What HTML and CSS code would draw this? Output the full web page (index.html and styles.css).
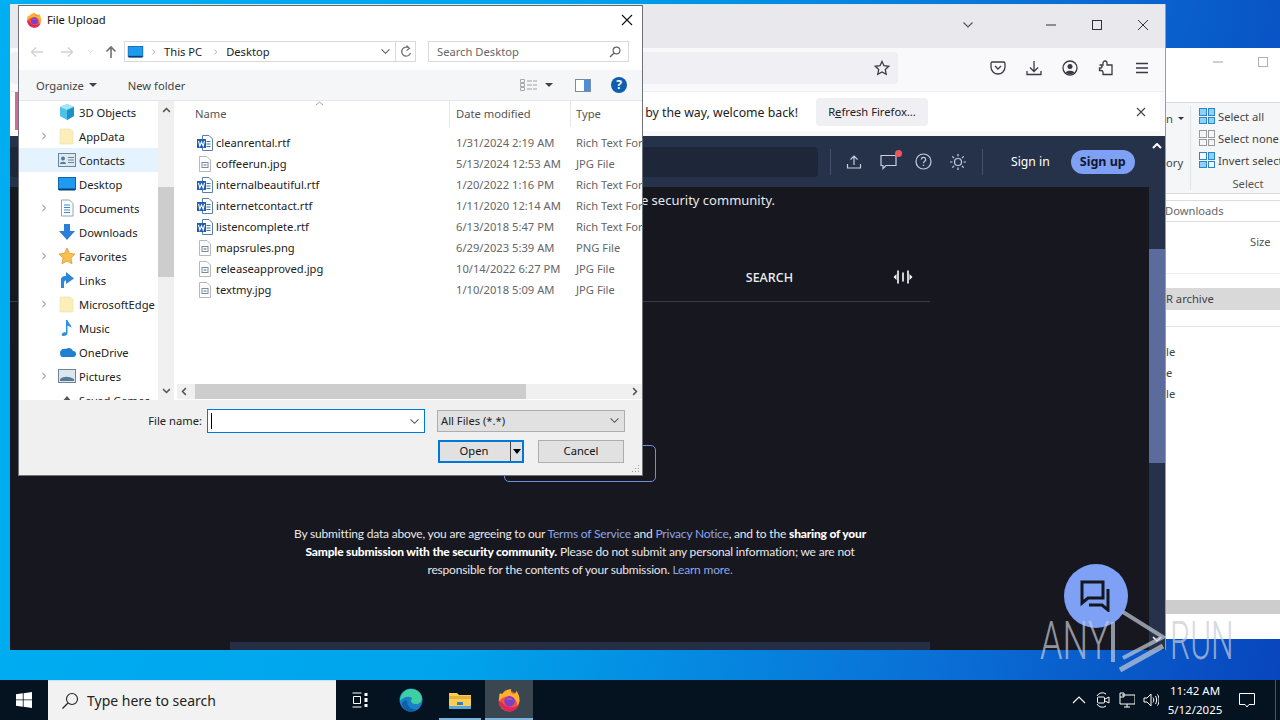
FILE: index.html
```html
<!DOCTYPE html>
<html lang="en">
<head>
    <meta charset="utf-8">
    <title>File Upload</title>
    <link rel="stylesheet" href="styles.css">
</head>
<body>
<svg class="defs" aria-hidden="true">
    <symbol id="fx" viewBox="0 0 20 20">
        <circle cx="10" cy="11" r="8.6" fill="#f2553a"/>
        <path d="M2 5 C2 8 1.500 9 1.500 11 C4 8 6 7 10 7 C14 7 17 10 17 15 C20 11 19 6 16 2 C16 3 16 4 14 5 C12 4 11 3 12 1 C9 1 6 2 4.500 5 C4 5 3 4 2 5Z" fill="#ffb02e"/>
        <path d="M1.500 11 C2 16 7 19.500 11 19.500 C15 19.500 17 17 18 14 C15 17 8 17 5 13 C4 12 3 11 1.500 11Z" fill="#e3245c"/>
        <circle cx="10.500" cy="11" r="4.400" fill="#7b3fc8"/>
        <path d="M7 9 C9 8 12 8 13 10 C11 10 9 10 7 9Z" fill="#c04fb0"/>
    </symbol>
    <symbol id="word" viewBox="0 0 18 18">
        <path d="M6.500 1.500H13L16.500 5V16.500H6.500Z" fill="#fff" stroke="#5a7fa8"/>
        <path d="M10.500 7.500h4M10.500 10h4M10.500 12.500h4" stroke="#3a6ea8"/>
        <rect x="1" y="5" width="9" height="9" fill="#1f5cb5"/>
        <path d="M2.500 6.800 L3.800 12 L5.500 8 L7.200 12 L8.500 6.800" fill="none" stroke="#fff" stroke-width="1.100"/>
    </symbol>
    <symbol id="pic" viewBox="0 0 18 18">
        <path d="M3.500 1.500H11L14.500 5V16.500H3.500Z" fill="#fdfdfd" stroke="#b4b9bf"/>
        <rect x="6" y="7.500" width="6" height="5" fill="#fff" stroke="#7d8b99"/>
        <rect x="7.500" y="9" width="3" height="2" fill="#a7b4c2"/>
    </symbol>
    <symbol id="folder" viewBox="0 0 18 18">
        <path d="M2 2h10l3 2v13H2Z" fill="#fbeeb9" stroke="#eadfae" stroke-width=".6"/>
    </symbol>
    <symbol id="screen" viewBox="0 0 18 14">
        <rect x="0.500" y="0.500" width="17" height="12" fill="#1e9bf0" stroke="#0b66b3"/>
        <path d="M1 12.500h16" stroke="#043f75" stroke-width="2"/>
    </symbol>
    <symbol id="chev" viewBox="0 0 8 12">
        <path d="M2 2l4 4-4 4" fill="none" stroke="#a6a6a6" stroke-width="1.500"/>
    </symbol>
    <symbol id="vee" viewBox="0 0 12 8">
        <path d="M1.500 1.500 6 6l4.500-4.500" fill="none" stroke="#555" stroke-width="1.200"/>
    </symbol>
</svg>

<div class="desktop">

    <!-- window behind firefox -->
    <section class="explorer">
        <div class="ex-caption">
            <svg class="ex-min" width="12" height="2"><path d="M1 1h10" stroke="#a0a0a0"/></svg>
            <span class="ex-max"></span>
        </div>
        <div class="ribbon">
            <div class="rb-left">
                <span class="rb-cut">n <i class="caret-sm"></i></span>
                <span class="rb-cut rb-ory">ory</span>
            </div>
            <div class="rb-group">
                <div class="rb-item"><span class="sel-ico all"><b></b><b></b><b></b><b></b></span>Select all</div>
                <div class="rb-item"><span class="sel-ico none"><b></b><b></b><b></b><b></b></span>Select none</div>
                <div class="rb-item"><span class="sel-ico inv"><b></b><b></b><b></b><b></b></span>Invert select</div>
                <div class="rb-label">Select</div>
            </div>
        </div>
        <div class="ex-path">Downloads</div>
        <div class="ex-head">Size</div>
        <div class="ex-sel">R archive</div>
        <div class="ex-rows">
            <div>le</div>
            <div>e</div>
            <div>le</div>
        </div>
        <div class="ex-hbar"></div>
    </section>

    <!-- firefox -->
    <section class="firefox">
        <div class="ff-title">
            <svg class="ff-tabs" width="12" height="8"><use href="#vee"/></svg>
            <div class="ff-caption">
                <svg width="12" height="12"><path d="M1 6h10" stroke="#333"/></svg>
                <svg width="12" height="12"><rect x="1.500" y="1.500" width="9" height="9" fill="none" stroke="#333"/></svg>
                <svg width="12" height="12"><path d="M1 1l10 10M11 1L1 11" stroke="#333"/></svg>
            </div>
        </div>
        <div class="ff-bar">
            <div class="urlbar">
                <svg width="16" height="16" viewBox="0 0 16 16"><path d="M8 1.400l2 4.300 4.700.6-3.400 3.200.9 4.700L8 11.900l-4.200 2.300.9-4.700L1.300 6.300 6 5.700Z" fill="none" stroke="#3a3a42" stroke-width="1.300"/></svg>
            </div>
            <div class="ff-icons">
                <svg width="16" height="16" viewBox="0 0 16 16"><path d="M2.500 2h11A1.500 1.500 0 0 1 15 3.500V7a7 7 0 0 1-14 0V3.500A1.500 1.500 0 0 1 2.500 2Z" fill="none" stroke="#3a3a42" stroke-width="1.300"/><path d="M5 6l3 3 3-3" fill="none" stroke="#3a3a42" stroke-width="1.300"/></svg>
                <svg width="16" height="16" viewBox="0 0 16 16"><path d="M8 1v10M4 7.500l4 4 4-4M1 11v3.500h14V11" fill="none" stroke="#3a3a42" stroke-width="1.300"/></svg>
                <svg width="16" height="16" viewBox="0 0 16 16"><circle cx="8" cy="8" r="7" fill="none" stroke="#3a3a42" stroke-width="1.300"/><circle cx="8" cy="6.500" r="2.500" fill="#3a3a42"/><path d="M3.500 12.500C5 10 11 10 12.500 12.500 11 14.500 5 14.500 3.500 12.500Z" fill="#3a3a42"/></svg>
                <svg width="16" height="16" viewBox="0 0 16 16"><path d="M1.500 5H5V3a2 2 0 0 1 4 0v2h5v9.500H5V12a1.800 1.800 0 0 0-1.800-1.500H1.500V8h1.700A1.300 1.300 0 0 0 3 5.500" fill="none" stroke="#3a3a42" stroke-width="1.300"/></svg>
                <svg width="16" height="16" viewBox="0 0 16 16"><path d="M2 3.500h12M2 8h12M2 12.500h12" stroke="#3a3a42" stroke-width="1.300"/></svg>
            </div>
        </div>
        <div class="ff-note">
            <span class="note-text">It looks like you haven't started Firefox in a while. Do you want to clean it up? And by the way, welcome back!</span>
            <span class="note-btn">R<u>e</u>fresh Firefox...</span>
            <svg class="note-x" width="10" height="10"><path d="M1 1l8 8M9 1L1 9" stroke="#444" stroke-width="1.100"/></svg>
        </div>
        <div class="ff-page">
            <header class="site-head">
                <div class="site-search"></div>
                <span class="site-rule"></span>
                <div class="site-icons">
                    <svg width="16" height="16" viewBox="0 0 16 16"><path d="M8 11V2M4.500 5.500 8 2l3.500 3.500M1.500 10v4h13v-4" fill="none" stroke="#c5cfe0" stroke-width="1.200"/></svg>
                    <span class="chat-ico">
                        <svg width="19" height="17" viewBox="0 0 19 17"><path d="M1 2.500h15v10H6l-3 3v-3H1Z" fill="none" stroke="#c5cfe0" stroke-width="1.200"/></svg>
                        <i class="dot"></i>
                    </span>
                    <svg width="17" height="17" viewBox="0 0 17 17"><circle cx="8.500" cy="8.500" r="7.500" fill="none" stroke="#c5cfe0" stroke-width="1.200"/><path d="M6.300 6.500a2.200 2.200 0 1 1 3.200 2c-.7.4-1 .8-1 1.700M8.500 11.700v1.300" fill="none" stroke="#c5cfe0" stroke-width="1.200"/></svg>
                    <svg width="18" height="18" viewBox="0 0 18 18"><circle cx="9" cy="9" r="3.500" fill="none" stroke="#c5cfe0" stroke-width="1.200"/><path d="M9 1v2.500M9 14.500V17M1 9h2.500M14.500 9H17M3.300 3.300l1.800 1.800M12.900 12.900l1.800 1.800M3.300 14.700l1.800-1.800M12.900 5.100l1.800-1.800" stroke="#c5cfe0" stroke-width="1.200"/></svg>
                </div>
                <span class="site-rule two"></span>
                <a class="sign-in">Sign in</a>
                <a class="sign-up">Sign up</a>
            </header>
            <div class="page-body">
                <main class="page-main">
                    <p class="lead">By submitting data above, you agree to share your Sample with the security community.</p>
                    <div class="tabs">
                        <span class="tab">SEARCH</span>
                        <svg width="20" height="14" viewBox="0 0 20 14"><path d="M3.500 4 .5 7l3 3ZM16.500 4l3 3-3 3Z" fill="#fff"/><path d="M5 .5v13M10 2.500v9M15 .5v13" stroke="#fff" stroke-width="1.600"/></svg>
                    </div>
                    <div class="upload-btn"></div>
                    <p class="legal">By submitting data above, you are agreeing to our <a>Terms of Service</a> and <a>Privacy Notice</a>, and to the <b>sharing of your<br>Sample submission with the security community.</b> Please do not submit any personal information; we are not<br>responsible for the contents of your submission. <a>Learn more.</a></p>
                    <div class="page-foot"></div>
                </main>
                <div class="page-scroll"><span class="page-thumb"></span></div>
            </div>
        </div>
    </section>
    <span class="fx-strip"></span>

    <!-- chat bubble and watermark -->
    <div class="chat-fab">
        <svg width="32" height="32" viewBox="0 0 32 32"><path d="M2 2h21v16H8l-6 5Z" fill="none" stroke="#14171f" stroke-width="3"/><path d="M28 9v21l-6-5H9" fill="none" stroke="#14171f" stroke-width="3"/></svg>
    </div>
    <svg class="fab-chev" width="10" height="6"><path d="M1 1l4 4 4-4" fill="none" stroke="#fff" stroke-width="1.500"/></svg>
    <svg class="head-chev" width="10" height="6"><path d="M1 5l4-4 4 4" fill="none" stroke="#fff" stroke-width="2"/></svg>
    <div class="mark">
        <span class="mark-t any">ANY</span>
        <svg width="60" height="66" viewBox="0 0 60 66"><path d="M5 14V54" fill="none" stroke="currentColor" stroke-width="4"/><path d="M15 4 55 29 15 50" fill="none" stroke="currentColor" stroke-width="4"/><path d="M12 62 55 38" fill="none" stroke="currentColor" stroke-width="5"/></svg>
        <span class="mark-t run">RUN</span>
    </div>

    <!-- file dialog -->
    <section class="dialog">
        <div class="dl-title">
            <svg width="16" height="16"><use href="#fx"/></svg>
            <span>File Upload</span>
            <svg class="dl-close" width="12" height="12"><path d="M1 1l10 10M11 1L1 11" stroke="#111" stroke-width="1.100"/></svg>
        </div>
        <div class="dl-nav">
            <div class="nav-arrows">
                <svg width="14" height="12" viewBox="0 0 14 12"><path d="M13 6H2M6 1.500 1.500 6 6 10.500" fill="none" stroke="#d4d4d4" stroke-width="1.500"/></svg>
                <svg width="14" height="12" viewBox="0 0 14 12"><path d="M1 6h11M8 1.500 12.500 6 8 10.500" fill="none" stroke="#d4d4d4" stroke-width="1.500"/></svg>
                <svg width="7" height="5" viewBox="0 0 12 8"><path d="M1.500 1.500 6 6l4.500-4.500" fill="none" stroke="#d4d4d4" stroke-width="1.500"/></svg>
                <svg width="12" height="13" viewBox="0 0 12 13"><path d="M6 13V2M1.500 6.500 6 2l4.500 4.500" fill="none" stroke="#707070" stroke-width="1.600"/></svg>
            </div>
            <div class="crumbs">
                <svg width="17" height="12"><use href="#screen"/></svg>
                <svg class="crumb-sep" width="5" height="8"><use href="#chev"/></svg>
                <span>This PC</span>
                <svg class="crumb-sep" width="5" height="8"><use href="#chev"/></svg>
                <span>Desktop</span>
                <svg class="crumb-vee" width="11" height="7"><use href="#vee"/></svg>
                <span class="crumb-refresh">
                    <svg width="12" height="13" viewBox="0 0 12 13"><path d="M9.500 3.500A4.500 4.500 0 1 0 10.500 8M6.500 0.500l3 3-3 2" fill="none" stroke="#777" stroke-width="1.300"/></svg>
                </span>
            </div>
            <div class="dl-search">
                <span>Search Desktop</span>
                <svg width="12" height="12" viewBox="0 0 12 12"><circle cx="7.500" cy="4.500" r="3.400" fill="none" stroke="#666" stroke-width="1.200"/><path d="M5 7 1 11" stroke="#666" stroke-width="1.500"/></svg>
            </div>
        </div>
        <div class="dl-tools">
            <span class="tool">Organize <i class="caret"></i></span>
            <span class="tool newf">New folder</span>
            <div class="tool-right">
                <svg width="17" height="12" viewBox="0 0 17 12"><path d="M.5.500h4v3h-4zM.5 4.500h4v3h-4zM.5 8.500h4v3h-4z" fill="none" stroke="#a8a8a8"/><path d="M7 2h5M7 6h5M7 10h5M13 2h4M13 6h4M13 10h4" stroke="#9aa0a6"/></svg>
                <i class="caret view"></i>
                <svg class="pane-ico" width="16" height="13" viewBox="0 0 16 13"><rect x=".5" y=".5" width="15" height="12" fill="#fff" stroke="#7d8b99"/><rect x="9" y="1" width="6" height="11" fill="#4a90d9"/></svg>
                <span class="help">?</span>
            </div>
        </div>
        <div class="dl-main">
            <nav class="side">
                <div class="side-item"><i class="tw"></i><svg width="18" height="18" viewBox="0 0 18 18"><path d="M9 1l7 3v9l-7 4-7-4V4Z" fill="#4cc2e4"/><path d="M9 1l7 3-7 3-7-3Z" fill="#a4e5f5"/><path d="M9 7l7-3v9l-7 4Z" fill="#1c93c4"/></svg>3D Objects</div>
                <div class="side-item"><i class="tw"><svg width="6" height="10"><use href="#chev"/></svg></i><svg width="18" height="18"><use href="#folder"/></svg>AppData</div>
                <div class="side-item on"><i class="tw"></i><svg width="18" height="14" viewBox="0 0 18 14"><rect x=".5" y=".5" width="17" height="13" fill="#dfe8ef" stroke="#6d8596"/><circle cx="5" cy="5.500" r="2" fill="#4a7ea8"/><path d="M2 11c0-3 6-3 6 0Z" fill="#4a7ea8"/><path d="M10 4.500h6M10 7h6M10 9.500h6" stroke="#6d8596"/></svg>Contacts</div>
                <div class="side-item"><i class="tw"></i><svg width="18" height="14"><use href="#screen"/></svg>Desktop</div>
                <div class="side-item"><i class="tw"><svg width="6" height="10"><use href="#chev"/></svg></i><svg width="18" height="18" viewBox="0 0 18 18"><path d="M3.500 1h8L15 4.500V17H3.500Z" fill="#fff" stroke="#8ea3b5"/><path d="M6 6h6M6 8.500h6M6 11h6M6 13.500h6" stroke="#3c8bcb" stroke-width="1.200"/></svg>Documents</div>
                <div class="side-item"><i class="tw"></i><svg width="18" height="18" viewBox="0 0 18 18"><path d="M6 1h6v7h5l-8 9-8-9h5Z" fill="#2c7fd6"/></svg>Downloads</div>
                <div class="side-item"><i class="tw"><svg width="6" height="10"><use href="#chev"/></svg></i><svg width="18" height="18" viewBox="0 0 18 18"><path d="M9 1l2.500 5.300 5.500.7-4 4 1 5.800L9 14l-5 2.800L5 11 1 7l5.500-.7Z" fill="#f7c04f" stroke="#d98f2c" stroke-width=".7"/></svg>Favorites</div>
                <div class="side-item"><i class="tw"></i><svg width="18" height="18" viewBox="0 0 18 18"><path d="M3 17V9c0-3 2-4 5-4V1l8 6.500L8 13V9.500C6 9.500 6 11 6 17Z" fill="#2c87d6"/></svg>Links</div>
                <div class="side-item"><i class="tw"><svg width="6" height="10"><use href="#chev"/></svg></i><svg width="18" height="18"><use href="#folder"/></svg>MicrosoftEdge</div>
                <div class="side-item"><i class="tw"></i><svg width="18" height="18" viewBox="0 0 18 18"><path d="M8 1h1.500c.3 3 4 4 4 8-1-1.500-2.500-2-4-2.500V14c0 2-2 3-4 3s-2.500-2-1-3 2.500-1 3.500-.5Z" fill="#2c8fe0"/></svg>Music</div>
                <div class="side-item"><i class="tw"></i><svg width="18" height="18" viewBox="0 0 18 18"><path d="M4 14h11a3 3 0 0 0 0-6c-1-3-5-4-7-2-3-1-6 1-6 4 0 2 1 4 2 4Z" fill="#1f7fd0"/></svg>OneDrive</div>
                <div class="side-item"><i class="tw"><svg width="6" height="10"><use href="#chev"/></svg></i><svg width="18" height="14" viewBox="0 0 18 14"><rect x=".5" y=".5" width="17" height="13" fill="#dbe6ef" stroke="#6d8596"/><path d="M2 10c4-3 8-3 14 0v2H2Z" fill="#5a7a94"/></svg>Pictures</div>
                <div class="side-item"><i class="tw"></i><svg width="18" height="18" viewBox="0 0 18 18"><path d="M3 12l6-7 6 7-6 4Z" fill="#555"/></svg>Saved Games</div>
            </nav>
            <div class="side-scroll">
                <svg width="9" height="6" viewBox="0 0 12 8"><path d="M1.500 6.500 6 2l4.500 4.500" fill="none" stroke="#555" stroke-width="2"/></svg>
                <span class="side-track"><span class="side-thumb"></span></span>
                <svg width="9" height="6" viewBox="0 0 12 8"><path d="M1.500 1.500 6 6l4.500-4.500" fill="none" stroke="#555" stroke-width="2"/></svg>
            </div>
            <div class="files">
                <div class="file-area">
                    <svg class="sort" width="9" height="5"><path d="M1 4l3.500-3L8 4" fill="none" stroke="#a0a0a0"/></svg>
                    <div class="file-head">
                        <span class="col-name">Name</span>
                        <span class="col-date">Date modified</span>
                        <span class="col-type">Type</span>
                    </div>
                    <div class="file-row"><span class="fn"><svg width="18" height="18"><use href="#word"/></svg>cleanrental.rtf</span><span>1/31/2024 2:19 AM</span><span>Rich Text Format</span></div>
                    <div class="file-row"><span class="fn"><svg width="18" height="18"><use href="#pic"/></svg>coffeerun.jpg</span><span>5/13/2024 12:53 AM</span><span>JPG File</span></div>
                    <div class="file-row"><span class="fn"><svg width="18" height="18"><use href="#word"/></svg>internalbeautiful.rtf</span><span>1/20/2022 1:16 PM</span><span>Rich Text Format</span></div>
                    <div class="file-row"><span class="fn"><svg width="18" height="18"><use href="#word"/></svg>internetcontact.rtf</span><span>1/11/2020 12:14 AM</span><span>Rich Text Format</span></div>
                    <div class="file-row"><span class="fn"><svg width="18" height="18"><use href="#word"/></svg>listencomplete.rtf</span><span>6/13/2018 5:47 PM</span><span>Rich Text Format</span></div>
                    <div class="file-row"><span class="fn"><svg width="18" height="18"><use href="#pic"/></svg>mapsrules.png</span><span>6/29/2023 5:39 AM</span><span>PNG File</span></div>
                    <div class="file-row"><span class="fn"><svg width="18" height="18"><use href="#pic"/></svg>releaseapproved.jpg</span><span>10/14/2022 6:27 PM</span><span>JPG File</span></div>
                    <div class="file-row"><span class="fn"><svg width="18" height="18"><use href="#pic"/></svg>textmy.jpg</span><span>1/10/2018 5:09 AM</span><span>JPG File</span></div>
                </div>
                <div class="hscroll">
                    <svg width="6" height="9" viewBox="0 0 8 12"><path d="M6.500 1.500 2 6l4.500 4.500" fill="none" stroke="#555" stroke-width="2"/></svg>
                    <span class="h-track"><span class="h-thumb"></span></span>
                    <svg width="6" height="9" viewBox="0 0 8 12"><path d="M1.500 1.500 6 6l-4.500 4.500" fill="none" stroke="#555" stroke-width="2"/></svg>
                </div>
            </div>
        </div>
        <div class="dl-bottom">
            <div class="dl-line">
                <label>File name:</label>
                <div class="name-input"><i class="cursor"></i><svg width="11" height="7"><use href="#vee"/></svg></div>
                <div class="type-select"><span>All Files (*.*)</span><svg width="11" height="7"><use href="#vee"/></svg></div>
            </div>
            <div class="dl-line btns">
                <div class="btn open"><span>Open</span><i class="split"></i></div>
                <div class="btn">Cancel</div>
            </div>
            <svg class="grip" width="10" height="10"><path d="M8 1h1v1H8zM5 4h1v1H5zM8 4h1v1H8zM2 7h1v1H2zM5 7h1v1H5zM8 7h1v1H8z" fill="#9a9a9a"/></svg>
        </div>
    </section>

    <!-- taskbar -->
    <footer class="taskbar">
        <div class="start">
            <svg width="16" height="16" viewBox="0 0 16 16"><path d="M0 2.200 6.800 1.300V7.500H0ZM7.600 1.200 16 0V7.500H7.600ZM0 8.300H6.800V14.700L0 13.800ZM7.600 8.300H16V16L7.600 14.800Z" fill="#fff"/></svg>
        </div>
        <div class="tb-search">
            <svg width="18" height="18" viewBox="0 0 18 18"><circle cx="11" cy="7" r="5.500" fill="none" stroke="#222" stroke-width="1.100"/><path d="M7 11 1.500 16.500" stroke="#222" stroke-width="1.300"/></svg>
            <span>Type here to search</span>
        </div>
        <div class="tb-btn">
            <svg width="16" height="16" viewBox="0 0 16 16"><path d="M.5 1h9M.5 15h9M1.500 4.500h7v7h-7z" fill="none" stroke="#fff"/><path d="M12.500 1h3v3h-3zM12.500 6h3v4h-3zM12.500 12h3v3h-3z" fill="#fff"/></svg>
        </div>
        <div class="tb-btn edge">
            <svg width="24" height="24" viewBox="0 0 24 24"><circle cx="12" cy="12" r="11.500" fill="#1a7fc9"/><path d="M1 13C1 6 6 1 12 1c6 0 11 4 11 10 0 3-3 5-6 5-3 0-5-1-5-3 0-1 1-2 1-3C10 8 5 8 1 13Z" fill="#3fd0a2"/><path d="M8 13c0 5 4 9 9 8-2 2-4 2.500-6 2.500C6 23 3 19 3 15c2-2 4-3 5-2Z" fill="#0f5ea8"/></svg>
        </div>
        <div class="tb-btn open">
            <svg width="22" height="18" viewBox="0 0 22 18"><path d="M0 2h8l2 2h12v13H0Z" fill="#f7cf57"/><path d="M0 5h22v3H0Z" fill="#e8b23a"/><path d="M8 11h6v3H8Z" fill="#2f7fc9"/><path d="M0 15h22v3H0Z" fill="#5aa4d6"/></svg>
        </div>
        <div class="tb-btn open active">
            <svg width="24" height="24"><use href="#fx"/></svg>
        </div>
        <div class="tray">
            <svg width="14" height="8" viewBox="0 0 14 8"><path d="M1 7l6-6 6 6" fill="none" stroke="#fff" stroke-width="1.100"/></svg>
            <svg class="t-cam" width="14" height="16" viewBox="0 0 14 16"><path d="M1 4A6 6 0 0 1 10 2M1 12a6 6 0 0 0 9 2" fill="none" stroke="#fff"/><rect x="1.500" y="5" width="7" height="6" rx="1" fill="none" stroke="#fff"/><path d="M9 7l4-2v6l-4-2" fill="none" stroke="#fff"/></svg>
            <svg class="t-net" width="16" height="16" viewBox="0 0 16 16"><path d="M3 3h13v9H1V1h4v4H1M8 12v3M5 15h6" fill="none" stroke="#fff"/></svg>
            <svg class="t-vol" width="16" height="14" viewBox="0 0 16 14"><path d="M1 5h3l4-4v12L4 9H1ZM10 4.500c1 1.500 1 3.500 0 5M12.500 3c1.500 2 1.500 6 0 8M14.500 1.500c2 3 2 8 0 11" fill="none" stroke="#fff"/></svg>
            <div class="clock"><span>11:42 AM</span><span>5/12/2025</span></div>
            <svg class="notif" width="16" height="15" viewBox="0 0 16 15"><path d="M.5.500h15v11H10l-2 2.500-2-2.500H.5Z" fill="none" stroke="#fff"/></svg>
            <span class="show-desk"></span>
        </div>
    </footer>
</div>
</body>
</html>
```

FILE: styles.css
```css
* { box-sizing: border-box; }
html, body { margin: 0; height: 100%; overflow: hidden; }
body { font-family: "Noto Sans", "Open Sans", sans-serif; font-size: 11.2px; color: #222; }
svg { display: block; flex: none; }
.defs { position: absolute; width: 0; height: 0; }

.desktop { position: relative; width: 1280px; height: 720px; overflow: hidden; display: flex; flex-direction: column; justify-content: flex-end; background: linear-gradient(100deg, #00aef2 0%, #00a4ec 40%, #0a6fd6 75%, #0845bd 100%); }

/* explorer behind */
.explorer { position: absolute; left: 1166px; top: 48px; width: 114px; height: 591px; background: #fff; color: #444; overflow: hidden; }
.ex-caption { height: 54px; position: relative; }
.ex-min { position: absolute; left: 46px; top: 13px; }
.ex-max { position: absolute; left: 92px; top: 9px; width: 10px; height: 10px; border: 1px solid #b0b0b0; }
.ribbon { height: 92px; background: #f5f6f7; border-top: 1px solid #dadbdc; border-bottom: 1px solid #dadbdc; display: flex; }
.rb-left { width: 25px; flex: none; border-right: 1px solid #e2e3e4; margin: 3px 0; display: flex; flex-direction: column; }
.rb-cut { display: flex; align-items: center; gap: 5px; height: 22px; margin-top: 1px; }
.rb-ory { margin-top: 22px; }
.caret-sm { border: 3px solid transparent; border-top: 3px solid #333; margin-top: 3px; }
.rb-group { flex: 1; padding: 2px 0 0 8px; white-space: nowrap; }
.rb-item { height: 22px; display: flex; align-items: center; gap: 3px; }
.rb-label { width: 98px; text-align: center; margin-top: 5px; color: #555; }
.sel-ico { width: 16px; height: 16px; flex: none; display: grid; grid-template-columns: 1fr 1fr; gap: 1px; }
.sel-ico b { border: 1px solid #9a9a9a; }
.sel-ico.all b { background: #8fd0f7; border-color: #2c84c9; }
.sel-ico.inv b:nth-child(2), .sel-ico.inv b:nth-child(3) { background: #8fd0f7; border-color: #2c84c9; }
.sel-ico.inv b:nth-child(1), .sel-ico.inv b:nth-child(4) { border-color: #2c84c9; }
.ex-path { height: 22px; margin-top: 6px; border-top: 1px solid #dcdcdc; border-bottom: 1px solid #dcdcdc; line-height: 20px; color: #666; white-space: nowrap; text-indent: -1px; }
.ex-head { height: 52px; padding: 8px 0 0 84px; color: #555; line-height: 24px; border-bottom: 1px solid #eee; margin-bottom: 14px; }
.ex-sel { height: 22px; background: #d9d9d9; line-height: 21px; margin-bottom: 16px; white-space: nowrap; }
.ex-rows { border-top: 1px solid #e4e4e4; padding-top: 14px; }
.ex-rows div { height: 21px; line-height: 21px; }
.ex-hbar { position: absolute; left: 0; right: 0; top: 552px; height: 14px; background: #cdcdcd; }

/* firefox window */
.firefox { position: absolute; left: 10px; top: 4px; width: 1156px; height: 646px; background: #16171f; display: flex; flex-direction: column; border-right: 1px solid #9a9a9a; }
.ff-title { height: 44px; flex: none; background: #e9e9ed; display: flex; align-items: center; justify-content: flex-end; border-top: 1px solid #e2e6e0; padding-bottom: 3px; }
.ff-tabs { margin-right: 71px; }
.ff-caption { display: flex; gap: 34px; padding-right: 16px; }
.ff-bar { height: 44px; flex: none; background: #f9f9fb; display: flex; align-items: center; border-bottom: 1px solid #eee; padding-bottom: 4px; }
.urlbar { width: 888px; height: 32px; background: #f0f0f4; display: flex; align-items: center; justify-content: flex-end; padding-right: 8px; border-radius: 4px; }
.ff-icons { margin-left: 92px; display: flex; gap: 20px; }
.ff-note { height: 44px; flex: none; background: #f9f9fb; display: flex; align-items: center; justify-content: flex-end; position: relative; border-bottom: 5px solid #f9f9fb; font-size: 12.3px; white-space: nowrap; overflow: hidden; padding: 1px 19px 0 0; }
.ff-note::before { content: ""; position: absolute; inset: 0 5px 0 0; background: #fff; }
.note-text, .note-btn, .note-x { position: relative; }
.note-btn { background: #f0f0f4; height: 28px; line-height: 28px; width: 112px; font-size: 11.2px; text-align: center; border-radius: 4px; margin-left: 18px; margin-right: 208px; }
.ff-page { flex: 1; display: flex; flex-direction: column; min-height: 0; }
.site-head { height: 51px; flex: none; background: #26324a; display: flex; align-items: center; color: #fff; }
.site-search { width: 808px; height: 30px; background: #1e263a; border-radius: 4px; }
.site-rule { width: 1px; height: 26px; background: #46526c; margin-left: 12px; }
.site-rule.two { margin-left: 15px; }
.site-icons { display: flex; align-items: center; gap: 17px; margin-left: 15px; }
.chat-ico { position: relative; display: block; margin-left: 1px; margin-right: -1px; }
.dot { position: absolute; right: -3px; top: -3px; width: 7px; height: 7px; border-radius: 50%; background: #f2555a; }
.sign-in { margin-left: 28px; font-size: 12.2px; }
.sign-up { margin-left: 21px; width: 64px; height: 24px; border-radius: 12px; background: #7ea0f5; color: #10182c; font-weight: 700; font-size: 12.5px; line-height: 24px; text-align: center; }
.page-body { flex: 1; display: flex; min-height: 0; }
.page-main { flex: 1; min-width: 0; overflow: hidden; display: flex; flex-direction: column; color: #e8e8ea; }
.lead { margin: 4px 0 0; width: 765px; text-align: right; font-size: 13px; line-height: 18px; white-space: nowrap; direction: rtl; unicode-bidi: plaintext; }
.tabs { width: 920px; height: 46px; margin-top: 47px; border-bottom: 1px solid #3a3e4c; display: flex; justify-content: flex-end; align-items: center; padding: 0 17px 3px 0; }
.tab { color: #f0f0f0; font-size: 12.5px; font-weight: 500; margin-right: 100px; }
.upload-btn { width: 152px; height: 37px; margin: 143px 0 0 494px; border: 1px solid #6d8ee0; border-radius: 5px; flex: none; }
.legal { width: 600px; margin: 43px 0 0 270px; text-align: center; font-family: "Lato", sans-serif; font-size: 12px; letter-spacing: -.19px; line-height: 18px; flex: none; }
.legal a { color: #8ea6e6; }
.legal b { color: #fff; font-weight: 900; }
.page-foot { width: 700px; height: 8px; margin: auto 0 0 220px; background: #252e45; flex: none; }
.page-scroll { width: 16px; background: #26324a; padding-top: 62px; flex: none; }
.page-thumb { display: block; height: 214px; background: #5a6b9c; }
.fx-strip { position: absolute; left: 15px; top: 92px; width: 3px; height: 38px; background: #d06a9a; }

/* overlay bits */
.chat-fab { position: absolute; left: 1064px; top: 564px; width: 64px; height: 64px; border-radius: 50%; background: #7ea0f5; display: flex; align-items: center; justify-content: center; }
.fab-chev { position: absolute; left: 1152px; top: 636px; }
.head-chev { position: absolute; left: 1152px; top: 143px; }
.mark { position: absolute; left: 1040px; top: 608px; display: flex; align-items: center; opacity: .7; color: #c4ccd8; }
.mark-t { font-family: "Roboto", sans-serif; font-weight: 300; font-size: 53px; line-height: 66px; display: inline-block; transform-origin: left center; }
.mark-t.any { width: 68px; transform: scaleX(.68); }
.mark-t.run { width: 64px; margin-left: 2px; transform: scaleX(.6); }

/* file dialog */
.dialog { position: absolute; left: 18px; top: 5px; width: 625px; height: 471px; background: #fff; border: 1px solid #6f7378; border-top-color: #5c6a78; display: flex; flex-direction: column; }
.dl-title { height: 27px; flex: none; display: flex; align-items: center; gap: 5px; padding: 0 9px 0 7px; color: #111; }
.dl-close { margin-left: auto; }
.dl-nav { height: 37px; flex: none; display: flex; align-items: center; padding-left: 11px; }
.nav-arrows { width: 94px; display: flex; align-items: center; gap: 16px; }
.nav-arrows svg:nth-child(3) { margin-left: -3px; margin-right: -5px; }
.crumbs { width: 292px; height: 21px; border: 1px solid #d9d9d9; display: flex; align-items: center; padding-left: 2px; color: #222; }
.crumb-sep { margin: 0 8px 0 7px; }
.crumbs span + .crumb-sep { margin-left: 11px; }
.crumb-vee { margin-left: auto; margin-right: 4px; }
.crumb-refresh { width: 20px; height: 19px; border-left: 1px solid #d9d9d9; display: flex; align-items: center; justify-content: center; }
.dl-search { width: 201px; height: 21px; margin-left: 12px; border: 1px solid #d9d9d9; display: flex; align-items: center; justify-content: space-between; padding: 0 7px 0 8px; color: #666; }
.dl-tools { height: 31px; flex: none; background: #f5f6f7; border-bottom: 1px solid #e6e6e6; display: flex; align-items: center; color: #444; padding-left: 17px; }
.tool { display: flex; align-items: center; gap: 5px; }
.newf { margin-left: 31px; }
.caret { border: 4px solid transparent; border-top: 4px solid #444; border-bottom: 0; display: block; }
.tool-right { margin-left: auto; display: flex; align-items: center; padding-right: 15px; }
.caret.view { margin-left: 8px; }
.pane-ico { margin-left: 22px; }
.help { width: 16px; height: 16px; margin-left: 20px; border-radius: 50%; background: #0f5fae; color: #fff; font-weight: 700; font-size: 12px; line-height: 16px; text-align: center; }
.dl-main { height: 299px; flex: none; display: flex; }
.side { width: 139px; flex: none; overflow: hidden; margin-top: -1px; height: 300px; }
.side-item { height: 24px; display: flex; align-items: center; white-space: nowrap; color: #222; }
.side-item.on { background: #e5f3ff; }
.side-item svg:last-of-type { margin-right: 3px; }
.tw { width: 39px; flex: none; display: flex; justify-content: flex-end; padding-right: 11px; }
.tw svg { margin-right: 0 !important; }
.side-scroll { width: 16px; flex: none; background: #f0f0f0; display: flex; flex-direction: column; align-items: center; padding: 6px 0; gap: 6px; }
.side-track { flex: 1; width: 16px; display: block; }
.side-thumb { display: block; height: 90px; margin-top: 68px; background: #cdcdcd; }
.files { flex: 1; min-width: 0; display: flex; flex-direction: column; }
.file-area { flex: 1; position: relative; overflow: hidden; }
.sort { position: absolute; left: 141px; top: 0; }
.file-head { height: 26px; display: grid; grid-template-columns: 275px 121px 1fr; color: #555; line-height: 26px; margin-bottom: 5px; }
.col-name { padding-left: 21px; }
.col-date { padding-left: 6px; border-left: 1px solid #e8e8e8; }
.col-type { padding-left: 5px; border-left: 1px solid #e8e8e8; }
.file-row { height: 21px; display: grid; grid-template-columns: 275px 127px 1fr; align-items: center; color: #666; white-space: nowrap; overflow: hidden; }
.file-row span:nth-child(2) { padding-left: 7px; }
.fn { display: flex; align-items: center; gap: 2px; padding-left: 22px; color: #222; }
.hscroll { height: 15px; flex: none; margin: 0 0 1px 3px; background: #f0f0f0; display: flex; align-items: center; padding: 0 4px; }
.h-track { flex: 1; height: 15px; padding-left: 8px; }
.h-thumb { display: block; width: 331px; height: 15px; background: #cdcdcd; }
.dl-bottom { flex: 1; background: #f0f0f0; position: relative; padding: 9px 0 0; }
.dl-line { display: flex; justify-content: flex-end; align-items: center; padding-right: 17px; }
.dl-line label { padding-bottom: 2px; }
.name-input { width: 218px; height: 24px; margin-left: 5px; background: #fff; border: 1px solid #0078d7; display: flex; align-items: center; justify-content: space-between; padding: 0 4px 0 3px; }
.cursor { width: 1px; height: 16px; background: #000; }
.type-select { width: 188px; height: 22px; margin-left: 12px; background: #e1e1e1; border: 1px solid #adadad; display: flex; align-items: center; justify-content: space-between; padding: 0 4px 1px 3px; }
.btns { margin-top: 7px; gap: 14px; padding-right: 18px; }
.btn { width: 86px; height: 23px; background: #e1e1e1; border: 1px solid #adadad; text-align: center; line-height: 19px; color: #111; }
.btn.open { border: 2px solid #0078d7; position: relative; line-height: 17px; padding-right: 14px; }
.split { position: absolute; right: 0; top: 0; bottom: 0; width: 12px; border-left: 1px solid #444; }
.split::after { content: ""; position: absolute; left: 2px; top: 7px; border: 4px solid transparent; border-top: 5px solid #000; border-bottom: 0; }
.grip { position: absolute; right: 2px; bottom: 1px; }

/* taskbar */
.taskbar { position: relative; height: 40px; flex: none; background: #04131f; display: flex; color: #fff; }
.start { width: 48px; display: flex; align-items: center; justify-content: center; }
.tb-search { width: 288px; background: #f2f2f2; border-top: 1px solid #cfe3ee; display: flex; align-items: center; gap: 8px; padding-left: 13px; color: #222; font-size: 14px; }
.tb-btn { width: 48px; display: flex; align-items: center; justify-content: center; }
.tb-btn.edge { margin-left: 3px; }
.tb-btn.open { position: relative; margin-left: 1px; }
.tb-btn.open::after { content: ""; position: absolute; left: 3px; right: 3px; bottom: 0; height: 2px; background: #7cb4e0; }
.tb-btn.active { background: #3a4650; }
.tb-btn.active::after { left: 0; right: 0; }
.tray { margin-left: auto; display: flex; align-items: center; position: relative; }
.t-cam { margin-left: 10px; }
.t-net { margin-left: 9px; }
.t-vol { margin-left: 8px; }
.clock { width: 62px; margin-left: 5px; display: flex; flex-direction: column; align-items: center; font-size: 11.5px; line-height: 19px; }
.tray .notif { margin-left: 13px; margin-right: 25px; }
.show-desk { position: absolute; right: 4px; top: 0; bottom: 0; width: 1px; background: #4a5660; }
```
